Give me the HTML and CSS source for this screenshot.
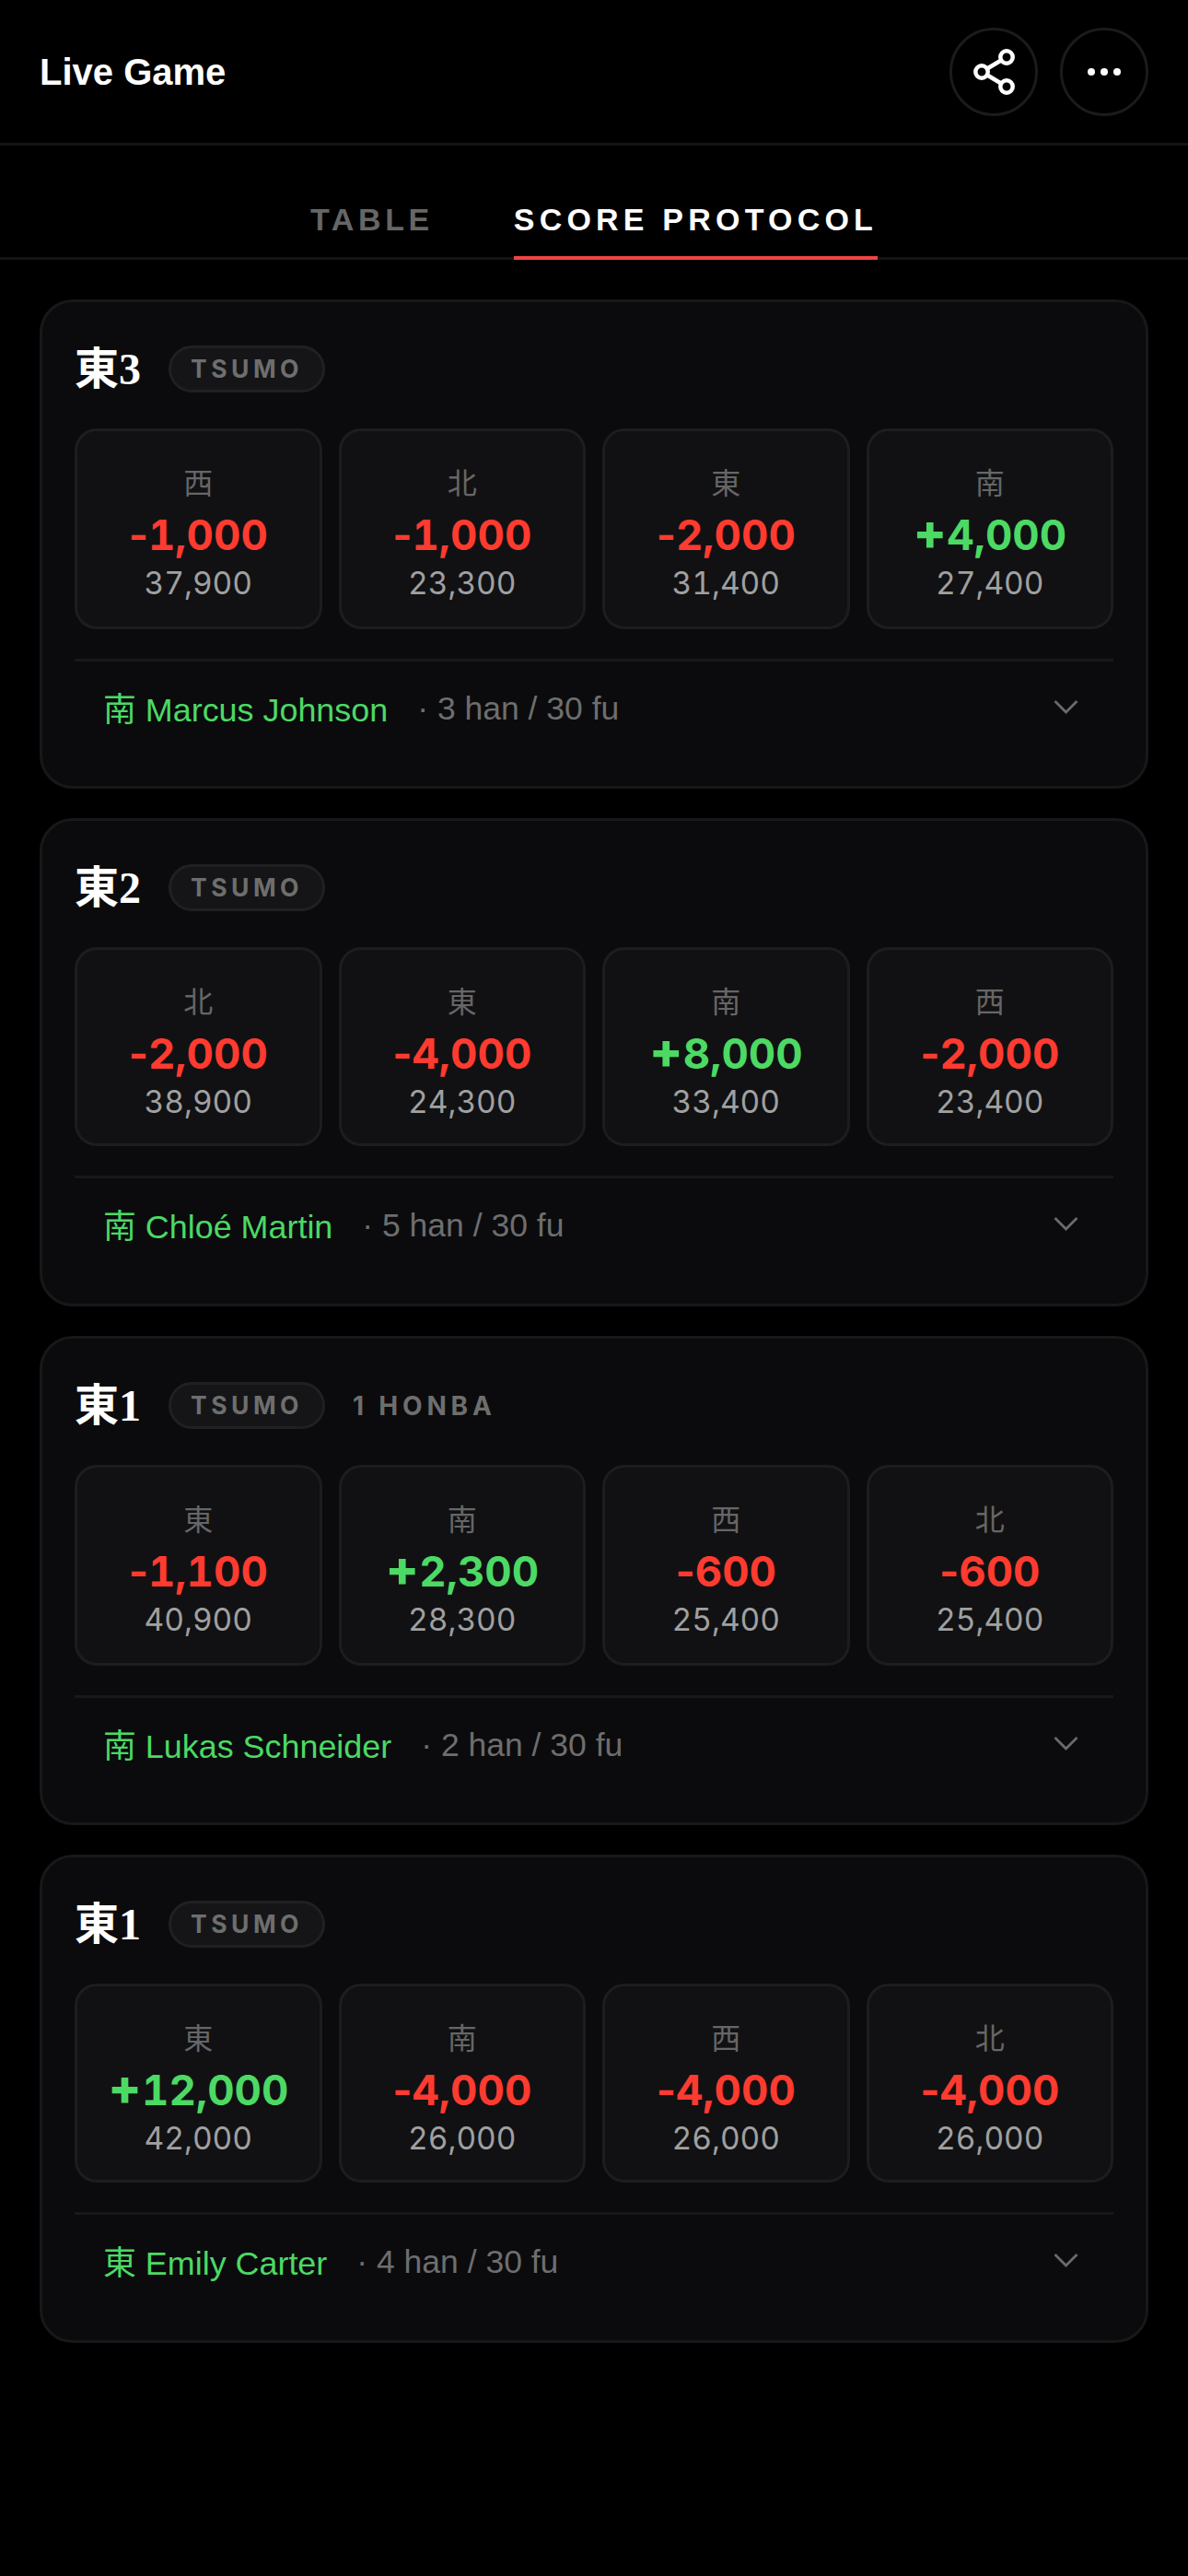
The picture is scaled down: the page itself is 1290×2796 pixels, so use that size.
FILE: index.html
```html
<!DOCTYPE html>
<html lang="en">
<head>
    <meta charset="UTF-8">
    <meta name="viewport" content="width=device-width, initial-scale=1.0">
    <title>Live Game</title>
    <link rel="stylesheet" href="styles.css">
</head>
<body>
    <header class="top-bar">
        <h1 class="page-title">Live Game</h1>
        <div class="top-actions">
            <button class="round-btn" type="button" aria-label="Share">
                <svg width="48" height="52" viewBox="0 0 48 52" fill="none" stroke="#fff" stroke-width="4.5">
                    <circle cx="38" cy="10" r="6.7"/>
                    <circle cx="11" cy="26" r="6.7"/>
                    <circle cx="38" cy="42" r="6.7"/>
                    <path d="M17 22.5 32 13.5M17 29.5 32 38.5"/>
                </svg>
            </button>
            <button class="round-btn" type="button" aria-label="More">
                <svg width="36" height="8" viewBox="0 0 36 8" fill="#fff">
                    <circle cx="4" cy="4" r="4"/>
                    <circle cx="18" cy="4" r="4"/>
                    <circle cx="32" cy="4" r="4"/>
                </svg>
            </button>
        </div>
    </header>

    <nav class="tabs">
        <a class="tab" href="#">TABLE</a>
        <a class="tab tab-active" href="#">SCORE PROTOCOL</a>
    </nav>

    <main class="rounds">
        <section class="round">
            <div class="round-head">
                <span class="round-name">東3</span>
                <span class="badge">TSUMO</span>
            </div>
            <div class="seats">
                <div class="seat"><span class="wind">西</span><span class="delta loss"><span class="sign">-</span>1,000</span><span class="score">37,900</span></div>
                <div class="seat"><span class="wind">北</span><span class="delta loss"><span class="sign">-</span>1,000</span><span class="score">23,300</span></div>
                <div class="seat"><span class="wind">東</span><span class="delta loss"><span class="sign">-</span>2,000</span><span class="score">31,400</span></div>
                <div class="seat"><span class="wind">南</span><span class="delta gain"><span class="sign">+</span>4,000</span><span class="score">27,400</span></div>
            </div>
            <div class="round-foot">
                <span class="winner">南 Marcus Johnson</span>
                <span class="hand">· 3 han / 30 fu</span>
                <svg class="chevron" width="27" height="16" viewBox="0 0 27 16" fill="none" stroke="#6a6a6a" stroke-width="2.8"><path d="M1.5 2 13.5 14 25.5 2"/></svg>
            </div>
        </section>

        <section class="round">
            <div class="round-head">
                <span class="round-name">東2</span>
                <span class="badge">TSUMO</span>
            </div>
            <div class="seats">
                <div class="seat"><span class="wind">北</span><span class="delta loss"><span class="sign">-</span>2,000</span><span class="score">38,900</span></div>
                <div class="seat"><span class="wind">東</span><span class="delta loss"><span class="sign">-</span>4,000</span><span class="score">24,300</span></div>
                <div class="seat"><span class="wind">南</span><span class="delta gain"><span class="sign">+</span>8,000</span><span class="score">33,400</span></div>
                <div class="seat"><span class="wind">西</span><span class="delta loss"><span class="sign">-</span>2,000</span><span class="score">23,400</span></div>
            </div>
            <div class="round-foot">
                <span class="winner">南 Chloé Martin</span>
                <span class="hand">· 5 han / 30 fu</span>
                <svg class="chevron" width="27" height="16" viewBox="0 0 27 16" fill="none" stroke="#6a6a6a" stroke-width="2.8"><path d="M1.5 2 13.5 14 25.5 2"/></svg>
            </div>
        </section>

        <section class="round">
            <div class="round-head">
                <span class="round-name">東1</span>
                <span class="badge">TSUMO</span>
                <span class="honba">1 HONBA</span>
            </div>
            <div class="seats">
                <div class="seat"><span class="wind">東</span><span class="delta loss"><span class="sign">-</span>1,100</span><span class="score">40,900</span></div>
                <div class="seat"><span class="wind">南</span><span class="delta gain"><span class="sign">+</span>2,300</span><span class="score">28,300</span></div>
                <div class="seat"><span class="wind">西</span><span class="delta loss"><span class="sign">-</span>600</span><span class="score">25,400</span></div>
                <div class="seat"><span class="wind">北</span><span class="delta loss"><span class="sign">-</span>600</span><span class="score">25,400</span></div>
            </div>
            <div class="round-foot">
                <span class="winner">南 Lukas Schneider</span>
                <span class="hand">· 2 han / 30 fu</span>
                <svg class="chevron" width="27" height="16" viewBox="0 0 27 16" fill="none" stroke="#6a6a6a" stroke-width="2.8"><path d="M1.5 2 13.5 14 25.5 2"/></svg>
            </div>
        </section>

        <section class="round">
            <div class="round-head">
                <span class="round-name">東1</span>
                <span class="badge">TSUMO</span>
            </div>
            <div class="seats">
                <div class="seat"><span class="wind">東</span><span class="delta gain"><span class="sign">+</span>12,000</span><span class="score">42,000</span></div>
                <div class="seat"><span class="wind">南</span><span class="delta loss"><span class="sign">-</span>4,000</span><span class="score">26,000</span></div>
                <div class="seat"><span class="wind">西</span><span class="delta loss"><span class="sign">-</span>4,000</span><span class="score">26,000</span></div>
                <div class="seat"><span class="wind">北</span><span class="delta loss"><span class="sign">-</span>4,000</span><span class="score">26,000</span></div>
            </div>
            <div class="round-foot">
                <span class="winner">東 Emily Carter</span>
                <span class="hand">· 4 han / 30 fu</span>
                <svg class="chevron" width="27" height="16" viewBox="0 0 27 16" fill="none" stroke="#6a6a6a" stroke-width="2.8"><path d="M1.5 2 13.5 14 25.5 2"/></svg>
            </div>
        </section>
    </main>
</body>
</html>
```

FILE: styles.css
```css
* {
    box-sizing: border-box;
}
body {
    margin: 0;
    min-height: 2796px;
    background-color: #000;
    color: #fff;
    font-family: "Liberation Sans", "Noto Sans CJK JP", sans-serif;
}
.top-bar {
    display: flex;
    justify-content: space-between;
    align-items: center;
    height: 158px;
    padding: 0 43px;
    border-bottom: 3px solid #141414;
}
.page-title {
    margin: 2px 0 0;
    font-size: 40px;
    font-weight: 700;
}
.top-actions {
    display: flex;
    gap: 24px;
}
.round-btn {
    display: flex;
    justify-content: center;
    align-items: center;
    width: 96px;
    height: 96px;
    padding: 0;
    background: none;
    border: 3px solid #1b1b1b;
    border-radius: 50%;
}
.tabs {
    display: flex;
    justify-content: center;
    gap: 87px;
    height: 124px;
    padding-top: 60px;
    border-bottom: 3px solid #141414;
}
.tab {
    height: 64px;
    color: #666;
    font-size: 34px;
    font-weight: 700;
    letter-spacing: 4.6px;
    line-height: 40px;
    text-decoration: none;
}
.tab-active {
    color: #fff;
    letter-spacing: 5.2px;
    border-bottom: 4px solid #ef4444;
}
.rounds {
    display: flex;
    flex-direction: column;
    gap: 32px;
    padding: 43px 43px;
}
.round {
    padding: 47px 35px 0;
    background-color: #0b0b0d;
    border: 3px solid #18181a;
    border-radius: 36px;
}
.round-head {
    display: flex;
    align-items: center;
    gap: 30px;
    height: 51px;
}
.round-name {
    width: 72px;
    margin-bottom: 10px;
    font-family: "Liberation Serif", "Noto Sans CJK JP", serif;
    font-size: 48px;
    font-weight: 700;
}
.badge {
    height: 51px;
    padding: 0 21px;
    background-color: #151517;
    border: 3px solid #202024;
    border-radius: 26px;
    color: #6e6e6e;
    font-family: Inter, "Liberation Sans", sans-serif;
    font-size: 26.5px;
    font-weight: 700;
    letter-spacing: 4.5px;
    line-height: 45px;
}
.honba {
    color: #6e6e6e;
    font-family: Inter, "Liberation Sans", sans-serif;
    font-size: 28px;
    font-weight: 700;
    letter-spacing: 4.8px;
}
.seats {
    display: grid;
    grid-template-columns: repeat(4, 1fr);
    gap: 18px;
    margin-top: 39px;
}
.seat {
    display: flex;
    flex-direction: column;
    align-items: center;
    height: 218px;
    padding-top: 37px;
    background-color: #111113;
    border: 3px solid #1d1d1f;
    border-radius: 24px;
}
.round:nth-child(even) .seat {
    height: 216px;
}
.wind {
    color: #666;
    font-size: 32px;
    line-height: 40px;
}
.delta {
    margin-top: 10px;
    font-family: Inter, "Liberation Sans", sans-serif;
    font-size: 45.5px;
    font-weight: 700;
    font-variant-numeric: tabular-nums;
    line-height: 52px;
}
.sign {
    font-variant-numeric: normal;
}
.gain .sign {
    font-size: 54px;
    font-weight: 800;
    line-height: 0;
}
.loss {
    color: #ff3b30;
}
.gain {
    color: #4cd964;
}
.score {
    margin-top: 6px;
    color: #a0a0a0;
    font-family: Inter, "Liberation Sans", sans-serif;
    font-size: 33.5px;
    font-variant-numeric: tabular-nums;
    line-height: 40px;
}
.round-foot {
    display: flex;
    align-items: center;
    height: 138px;
    margin-top: 32px;
    padding: 0 38px 38px 31px;
    border-top: 3px solid #18181a;
}
.round:nth-child(even) .round-foot {
    height: 139px;
}
.winner {
    color: #4cd964;
    font-size: 35.9px;
}
.hand {
    margin-top: 5px;
    margin-left: 32px;
    color: #6e6e6e;
    font-size: 35.5px;
}
.chevron {
    margin-left: auto;
}
```
